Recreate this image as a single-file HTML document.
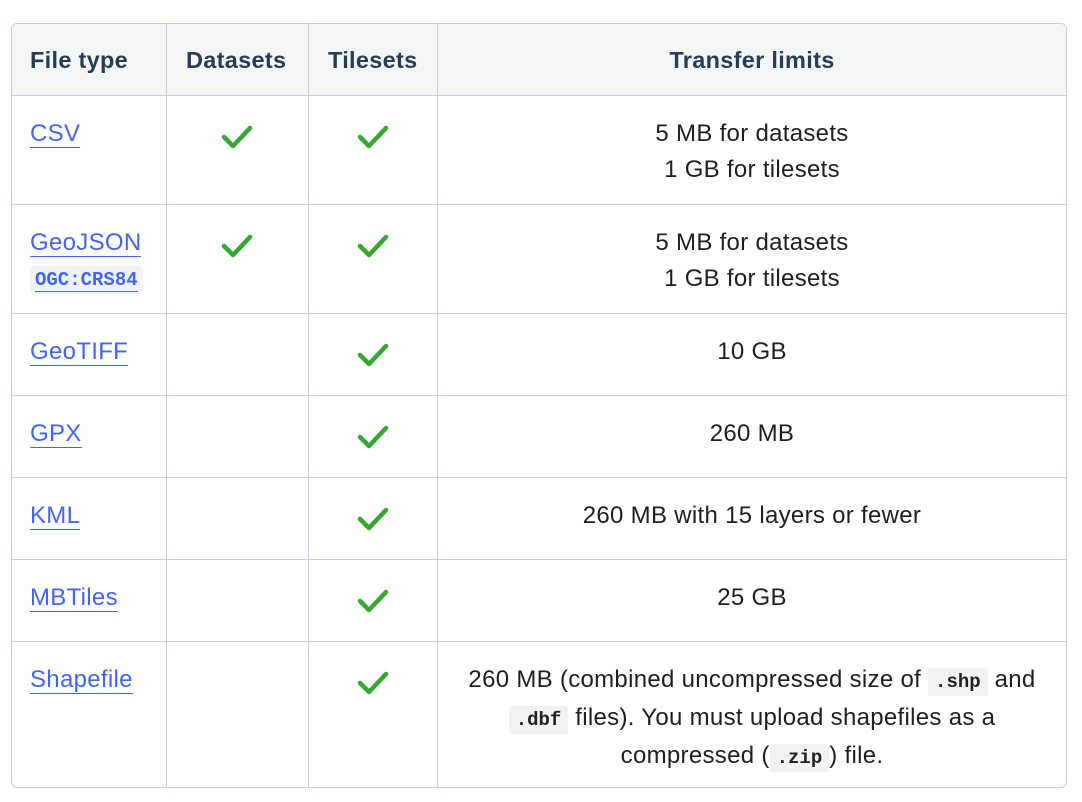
<!DOCTYPE html>
<html><head><meta charset="utf-8"><style>
*{margin:0;padding:0;box-sizing:border-box}
body{width:1082px;height:802px;background:#fff;font-family:"Liberation Sans",sans-serif;color:#1f1f1f;position:relative;overflow:hidden}
.box{position:absolute;left:11px;top:23px;width:1056px;height:765px;border:1px solid #c4cfdc;border-radius:6px;overflow:hidden}
.hd{position:absolute;left:0;top:0;width:100%;height:72px;background:#f4f6f6;border-bottom:1px solid #c4cfdc}
.vl{position:absolute;top:0;bottom:0;width:1px;background:#c4cfdc}
.hl{position:absolute;left:0;right:0;height:1px;background:#c4cfdc}
.t{position:absolute;font-size:24px;letter-spacing:0.3px;line-height:36px;white-space:nowrap}
.h{position:absolute;font-size:23.5px;font-weight:bold;color:#273d56;top:18px;line-height:36px;letter-spacing:0.3px}
a{color:#4264fb;text-decoration:none;border-bottom:1.5px solid #4264fb;line-height:26px;display:inline-block}
.c{position:absolute;text-align:center}
code{font-family:"Liberation Mono",monospace;font-size:19px;letter-spacing:0;background:#f1f3f3;border-radius:3px;padding:3px 7px;font-weight:bold;color:#222}
</style></head><body>
<div class="box">
<div class="hd"></div>
<div class="vl" style="left:154px"></div>
<div class="vl" style="left:296px"></div>
<div class="vl" style="left:425px"></div>
<div class="hl" style="top:180px"></div>
<div class="hl" style="top:289px"></div>
<div class="hl" style="top:371px"></div>
<div class="hl" style="top:453px"></div>
<div class="hl" style="top:535px"></div>
<div class="hl" style="top:617px"></div>
<div class="h" style="left:18px">File type</div>
<div class="h" style="left:174px">Datasets</div>
<div class="h" style="left:316px">Tilesets</div>
<div class="h" style="left:425px;width:630px;text-align:center">Transfer limits</div>

<div class="t" style="left:18px;top:92px"><a>CSV</a></div>
<div class="t c" style="left:425px;width:630px;top:92px">5 MB for datasets<br>1 GB for tilesets</div>

<div class="t" style="left:18px;top:201px"><a>GeoJSON</a></div>
<div style="position:absolute;left:18px;top:242px;background:#f1f3f3;border-radius:4px;padding:2px 5px;font-family:'Liberation Mono',monospace;font-size:19px;font-weight:bold;color:#4264fb;line-height:24px"><span style="border-bottom:1.5px solid #4264fb">OGC:CRS84</span></div>
<div class="t c" style="left:425px;width:630px;top:201px">5 MB for datasets<br>1 GB for tilesets</div>

<div class="t" style="left:18px;top:310px"><a>GeoTIFF</a></div>
<div class="t c" style="left:425px;width:630px;top:310px">10 GB</div>
<div class="t" style="left:18px;top:392px"><a>GPX</a></div>
<div class="t c" style="left:425px;width:630px;top:392px">260 MB</div>
<div class="t" style="left:18px;top:474px"><a>KML</a></div>
<div class="t c" style="left:425px;width:630px;top:474px">260 MB with 15 layers or fewer</div>
<div class="t" style="left:18px;top:556px"><a>MBTiles</a></div>
<div class="t c" style="left:425px;width:630px;top:556px">25 GB</div>
<div class="t" style="left:18px;top:638px"><a>Shapefile</a></div>
<div class="t c" style="left:425px;width:630px;top:638px">260 MB (combined uncompressed size of <code>.shp</code> and<br><code>.dbf</code> files). You must upload shapefiles as a<br>compressed (<code>.zip</code>) file.</div>
</div>
<svg width="1082" height="802" style="position:absolute;left:0;top:0">
<defs><path id="k" d="M-13,1 L-4,10 L13,-8" fill="none" stroke="#34a832" stroke-width="4.5" stroke-linecap="round" stroke-linejoin="round"/></defs>
<use href="#k" x="237" y="136"/><use href="#k" x="373" y="136"/>
<use href="#k" x="237" y="245"/><use href="#k" x="373" y="245"/>
<use href="#k" x="373" y="354"/><use href="#k" x="373" y="436"/>
<use href="#k" x="373" y="518"/><use href="#k" x="373" y="600"/>
<use href="#k" x="373" y="682"/>
</svg>
</body></html>
